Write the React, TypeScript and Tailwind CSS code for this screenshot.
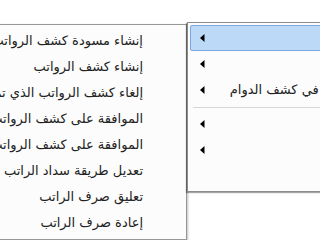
import React from "react";

const leftItems = [
  "إنشاء مسودة كشف الرواتب الشهري",
  "إنشاء كشف الرواتب",
  "إلغاء كشف الرواتب الذي تم إنشاؤه",
  "الموافقة على كشف الرواتب المبدئي",
  "الموافقة على كشف الرواتب النهائي",
  "تعديل طريقة سداد الراتب بالجملة",
  "تعليق صرف الراتب",
  "إعادة صرف الراتب",
];

function Arrow() {
  return (
    <svg width="5" height="8" viewBox="0 0 5 8" className="shrink-0">
      <path d="M0 4 L4.5 0 L4.5 8 Z" fill="#000" />
    </svg>
  );
}

function RightRow({ text, highlight, arrow = true }: { text: string; highlight?: boolean; arrow?: boolean }) {
  return (
    <div
      className={
        highlight
          ? "h-[26px] flex flex-row items-center border border-[#7aa7dd] bg-[#bcdaf8] rounded-[2px]"
          : "h-[26px] flex flex-row items-center border border-transparent"
      }
    >
      <div className="w-[9px]" />
      <div className="w-[5px] flex items-center">{arrow ? <Arrow /> : null}</div>
      <div className="flex-1 text-right pr-[86px] whitespace-nowrap text-[13px] text-[#222]" dir="rtl">
        {text}
      </div>
    </div>
  );
}

export default function App() {
  return (
    <div
      className="relative w-[320px] h-[240px] overflow-hidden bg-white"
      style={{ fontFamily: "'DejaVu Sans', sans-serif" }}
    >
      {/* Left (sub)menu */}
      <div className="absolute left-[-80px] top-[24px] w-[267px] h-[216px] border border-[#979797] bg-[#fcfcfc] shadow-[1px_1px_2px_rgba(0,0,0,0.25)]">
        <div className="pt-[3px] flex flex-col" dir="rtl">
          {leftItems.map((t) => (
            <div key={t} className="h-[26px] flex items-center pr-[43px] whitespace-nowrap text-[13px] text-[#222]">
              {t}
            </div>
          ))}
        </div>
      </div>

      {/* Right (parent) menu */}
      <div className="absolute left-[187px] top-[22px] w-[300px] h-[170px] border border-[#8c8c8c] bg-[#fcfcfc] shadow-[-1px_1px_1px_rgba(0,0,0,0.35)] p-[2px]">
        <RightRow text="كشف الرواتب" highlight />
        <RightRow text="الدوام" />
        <RightRow text="إدخال البيانات في كشف الدوام" />
        <div className="h-[8px] flex items-center pl-[3px]">
          <div className="w-full h-[1px] bg-[#d7d7d7]" />
        </div>
        <RightRow text="التقارير" />
        <RightRow text="الإعدادات" />
        <RightRow text="خروج" arrow={false} />
      </div>
    </div>
  );
}
